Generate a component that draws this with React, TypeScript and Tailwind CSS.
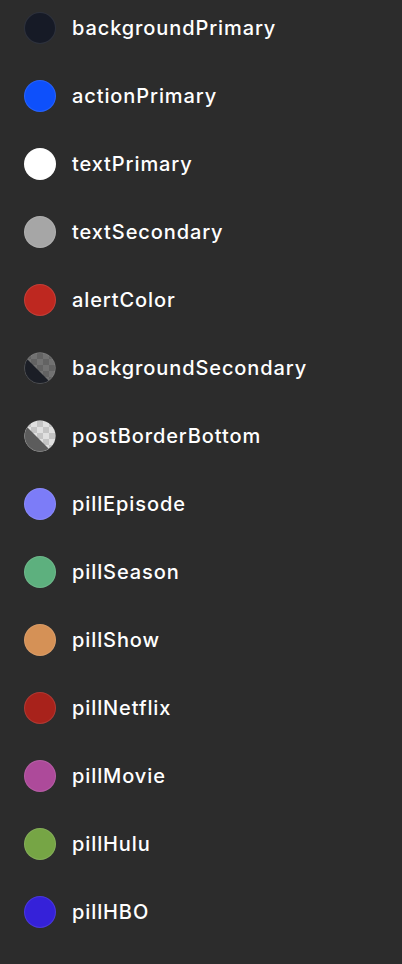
import React from "react";

type Item = { name: string; color?: string; kind?: "split"; solid?: string; light?: string; dark?: string };

const items: Item[] = [
  { name: "backgroundPrimary", color: "#161a26" },
  { name: "actionPrimary", color: "#0e50fb" },
  { name: "textPrimary", color: "#ffffff" },
  { name: "textSecondary", color: "#a6a6a6" },
  { name: "alertColor", color: "#be2820" },
  { name: "backgroundSecondary", kind: "split", solid: "#1b1e26", light: "#727272", dark: "#636363" },
  { name: "postBorderBottom", kind: "split", solid: "#5c5c5c", light: "#e0e0e0", dark: "#c4c4c4" },
  { name: "pillEpisode", color: "#7c7cf8" },
  { name: "pillSeason", color: "#5db07e" },
  { name: "pillShow", color: "#d59156" },
  { name: "pillNetflix", color: "#a8221b" },
  { name: "pillMovie", color: "#ad4a9a" },
  { name: "pillHulu", color: "#76a545" },
  { name: "pillHBO", color: "#3521d9" },
];

function Swatch({ item, idx }: { item: Item; idx: number }) {
  if (item.kind === "split") {
    const id = `clip${idx}`;
    const pid = `pat${idx}`;
    return (
      <svg width="32" height="32" viewBox="0 0 32 32" className="shrink-0">
        <defs>
          <clipPath id={id}>
            <circle cx="16" cy="16" r="15.5" />
          </clipPath>
          <pattern id={pid} width="12" height="12" patternUnits="userSpaceOnUse" x="1" y="1">
            <rect width="12" height="12" fill={item.light} />
            <rect width="6" height="6" fill={item.dark} />
            <rect x="6" y="6" width="6" height="6" fill={item.dark} />
          </pattern>
        </defs>
        <g clipPath={`url(#${id})`}>
          <rect width="32" height="32" fill={`url(#${pid})`} />
          <polygon points="0,4 28,32 0,32" fill={item.solid} />
        </g>
        <circle cx="16" cy="16" r="15.5" fill="none" stroke="rgba(255,255,255,0.12)" strokeWidth="1" />
      </svg>
    );
  }
  return (
    <div
      className="w-8 h-8 rounded-full shrink-0 border border-white/10"
      style={{ backgroundColor: item.color }}
    />
  );
}

export default function App() {
  return (
    <div className="w-[402px] h-[964px] bg-[#2c2c2c] pt-3" style={{ fontFamily: "Inter, 'Noto Sans', sans-serif" }}>
      <div className="flex flex-col gap-9">
        {items.map((it, i) => (
          <div key={it.name} className="flex items-center h-8 pl-6 gap-4">
            <Swatch item={it} idx={i} />
            <span className="text-[20px] font-[450] tracking-[0.9px] text-white leading-none">{it.name}</span>
          </div>
        ))}
      </div>
    </div>
  );
}
